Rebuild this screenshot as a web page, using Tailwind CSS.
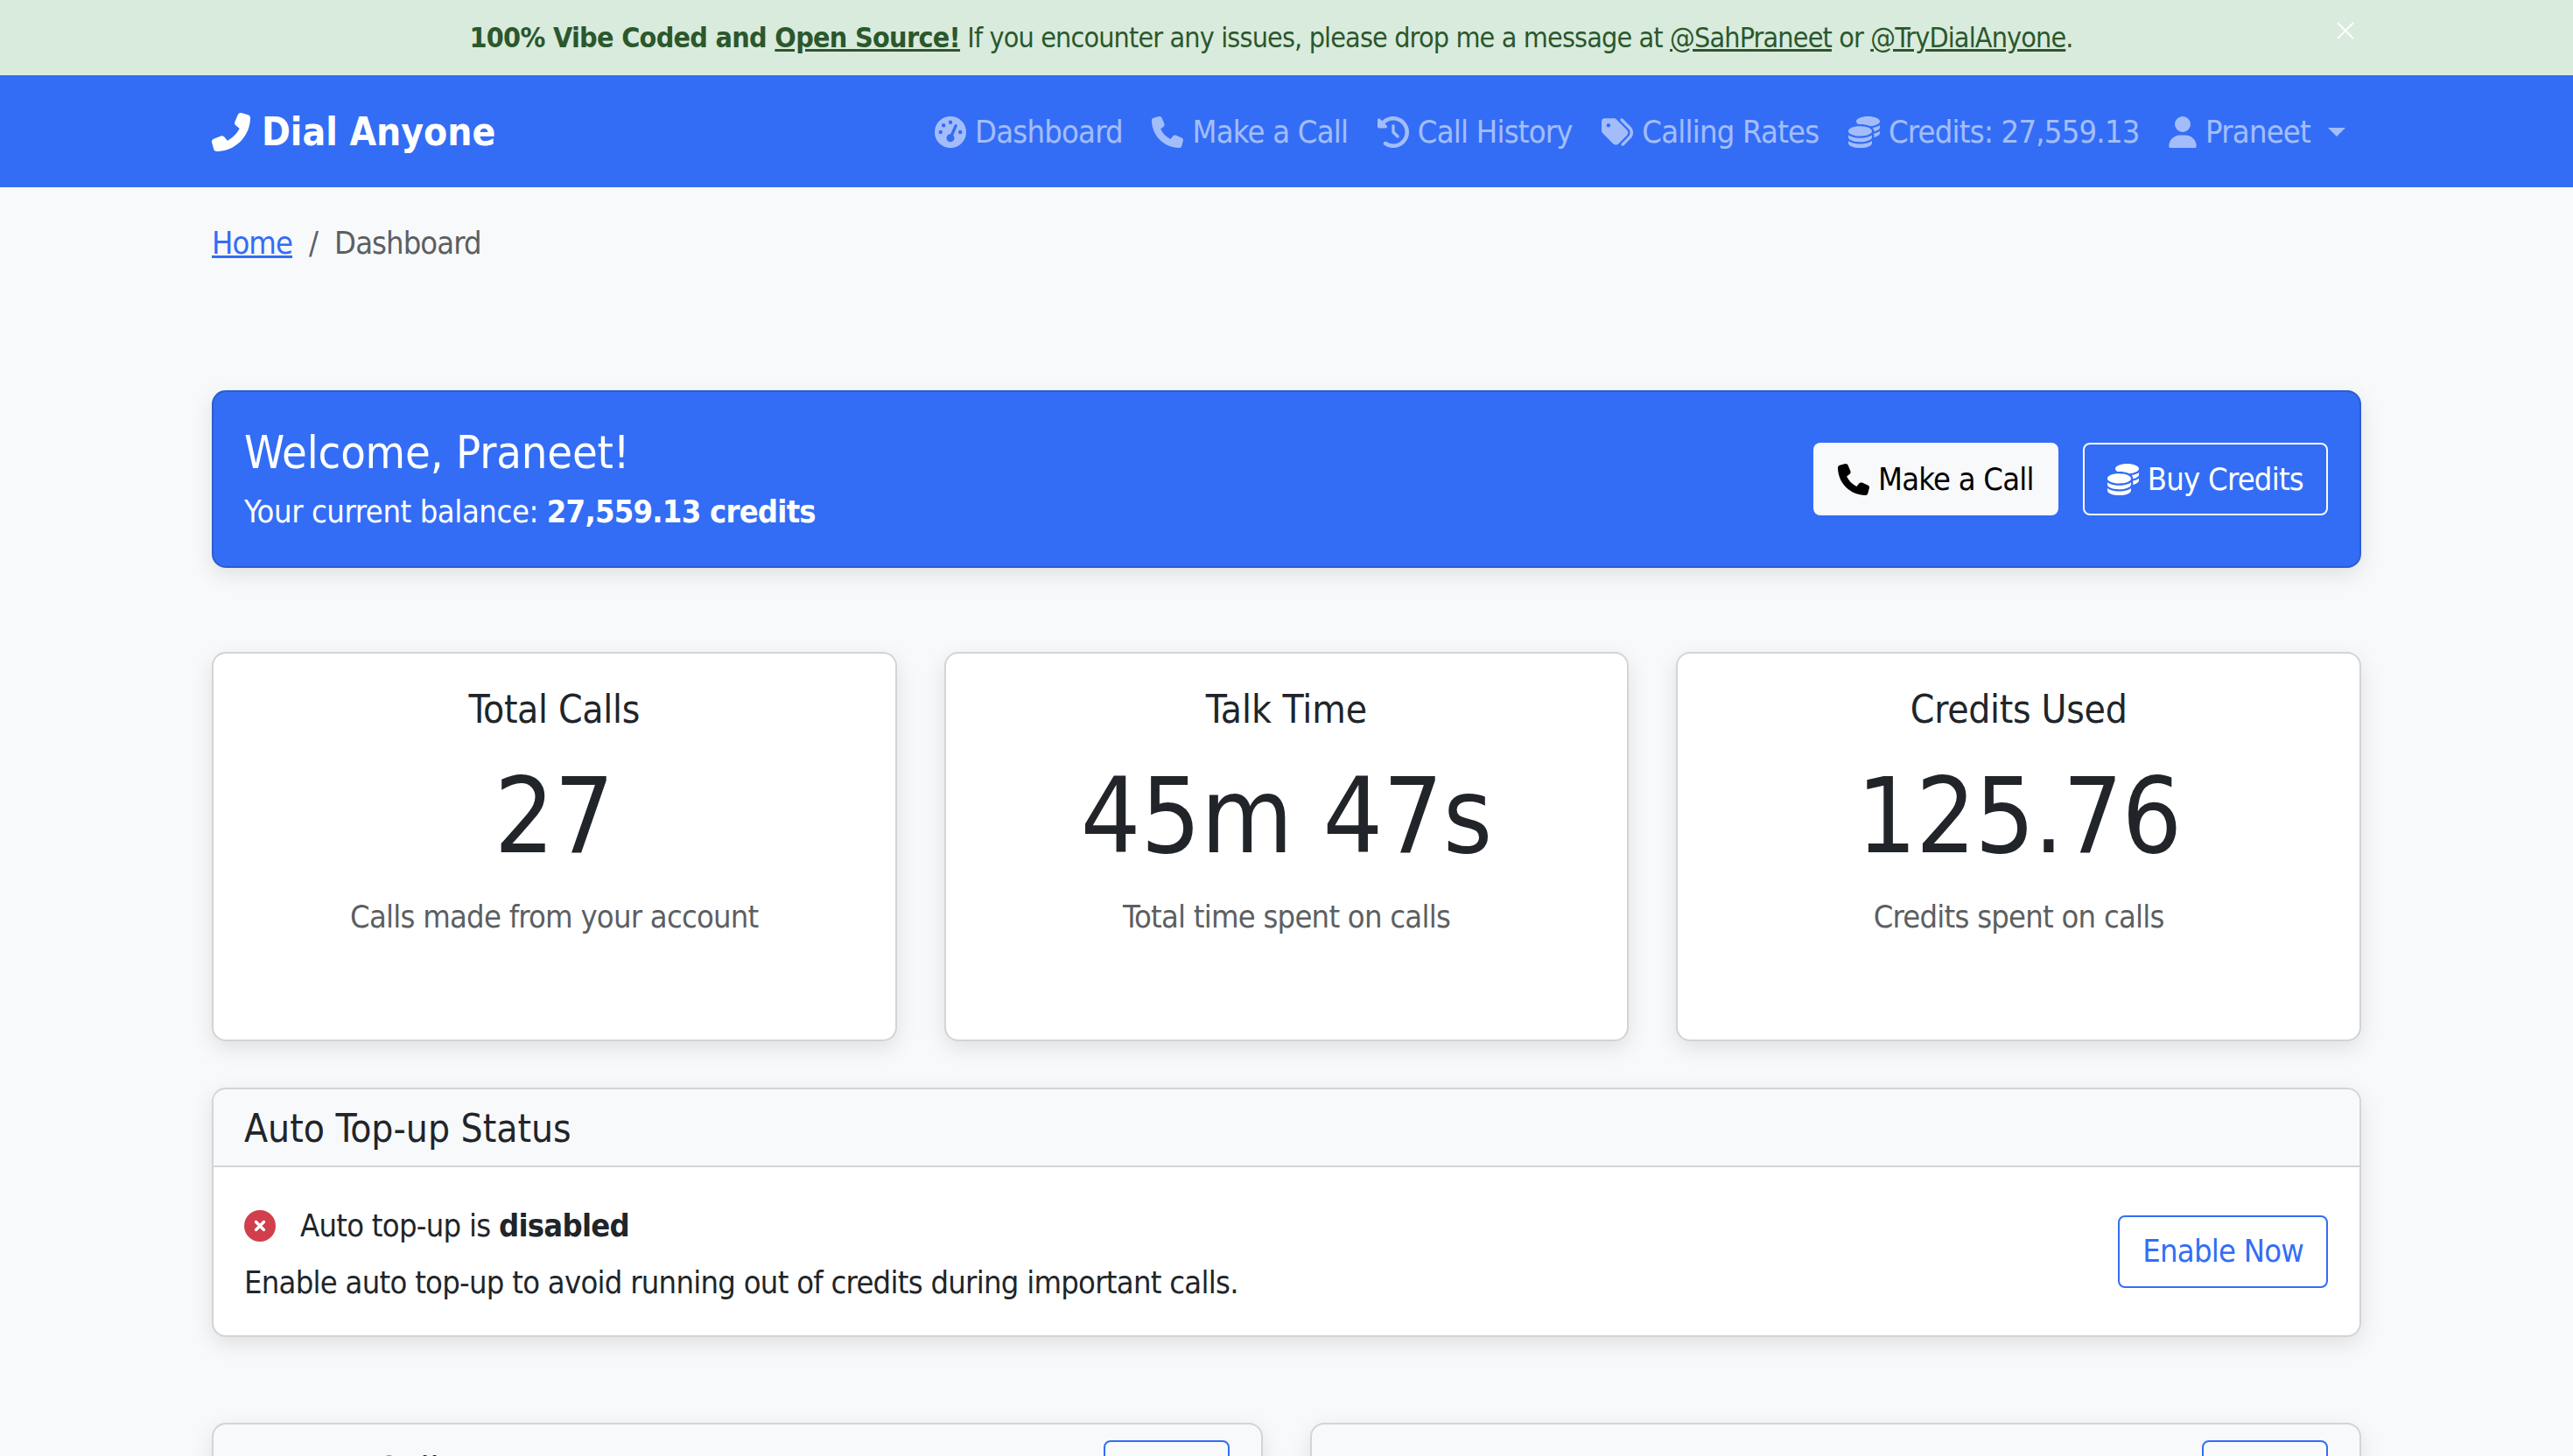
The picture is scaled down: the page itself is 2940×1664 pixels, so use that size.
<!DOCTYPE html>
<html lang="en">
  <head>
    <meta charset="UTF-8" />
    <title>Dial Anyone</title>
    <script src="https://cdn.jsdelivr.net/npm/@tailwindcss/browser@4"></script>
  </head>
  <body class="bg-[#f8f9fb] text-[#212529] font-['DejaVu_Sans_Condensed','DejaVu_Sans',sans-serif] font-stretch-condensed text-[36px] tracking-[-0.75px] h-[1664px] overflow-hidden">
    <div class="relative h-[86px] pr-[35px] bg-[#d9ebdc] text-[#2b572d] flex items-center justify-center text-[32px] tracking-[-0.85px]">
      <p><b class="tracking-[-0.7px]">100% Vibe Coded and <a href="#" class="underline">Open Source!</a></b> If you encounter any issues, please drop me a message at <a href="#" class="underline">@SahPraneet</a> or <a href="#" class="underline">@TryDialAnyone</a>.</p>
      <svg class="absolute left-[2668px] top-[23px] w-[24px] h-[24px]" viewBox="0 0 16 16" fill="none" stroke="#fff" stroke-width="1.2"><path d="M2 2l12 12M14 2L2 14" /></svg>
    </div>
    <header class="h-[128px] pt-[2px] bg-[#336df5] flex items-center justify-between pl-[242px] pr-[260px]">
      <a href="#" class="flex items-center gap-[13px] text-white font-bold text-[44px] tracking-normal">
        <svg class="w-[44px] h-[44px]" viewBox="0 0 512 512" fill="currentColor"><path d="M347.1 24.6c7.7-18.6 28-28.5 47.4-23.2l88 24C499.9 30.2 512 46 512 64c0 247.4-200.6 448-448 448c-18 0-33.8-12.1-38.6-29.5l-24-88c-5.3-19.4 4.6-39.7 23.2-47.4l96-40c16.3-6.8 35.2-2.1 46.3 11.6L207.3 368c70.4-33.3 127.4-90.3 160.7-160.7L318.7 167c-13.7-11.2-18.4-30-11.6-46.3l40-96z" /></svg>
        Dial Anyone
      </a>
      <nav class="flex items-center gap-[33.5px] text-white/55">
        <a href="#" class="flex items-center gap-[10px]"><svg class="w-[36px] h-[36px]" viewBox="0 0 512 512" fill="currentColor"><path d="M0 256a256 256 0 1 1 512 0A256 256 0 1 1 0 256zM288 96a32 32 0 1 0 -64 0 32 32 0 1 0 64 0zM256 416c35.3 0 64-28.7 64-64c0-17.4-6.9-33.1-18.1-44.6L366 161.7c5.3-12.1-.2-26.3-12.3-31.6s-26.3 .2-31.6 12.3L257.9 288c-.6 0-1.3 0-1.9 0c-35.3 0-64 28.7-64 64s28.7 64 64 64zM176 144a32 32 0 1 0 -64 0 32 32 0 1 0 64 0zM96 288a32 32 0 1 0 0-64 32 32 0 1 0 0 64zm352-32a32 32 0 1 0 -64 0 32 32 0 1 0 64 0z" /></svg>Dashboard</a>
        <a href="#" class="flex items-center gap-[10px]"><svg class="w-[36px] h-[36px]" viewBox="0 0 512 512" fill="currentColor"><path d="M164.9 24.6c-7.7-18.6-28-28.5-47.4-23.2l-88 24C12.1 30.2 0 46 0 64C0 311.4 200.6 512 448 512c18 0 33.8-12.1 38.6-29.5l24-88c5.3-19.4-4.6-39.7-23.2-47.4l-96-40c-16.3-6.8-35.2-2.1-46.3 11.6L304.7 368C234.3 334.7 177.3 277.7 144 207.3L193.3 167c13.7-11.2 18.4-30 11.6-46.3l-40-96z" /></svg>Make a Call</a>
        <a href="#" class="flex items-center gap-[10px]"><svg class="w-[36px] h-[36px]" viewBox="0 0 512 512" fill="currentColor"><path d="M75 75L41 41C25.9 25.9 0 36.6 0 57.9V168c0 13.3 10.7 24 24 24H134.1c21.4 0 32.1-25.9 17-41l-30.8-30.8C155 85.5 203 64 256 64c106 0 192 86 192 192s-86 192-192 192c-40.8 0-78.6-12.7-109.7-34.4c-14.5-10.1-34.4-6.6-44.6 7.9s-6.6 34.4 7.9 44.6C151.2 495 201.7 512 256 512c141.4 0 256-114.6 256-256S397.4 0 256 0C185.3 0 121.3 28.7 75 75zm181 53c-13.3 0-24 10.7-24 24V256c0 6.4 2.5 12.5 7 17l72 72c9.4 9.4 24.6 9.4 33.9 0s9.4-24.6 0-33.9l-65-65V152c0-13.3-10.7-24-24-24z" /></svg>Call History</a>
        <a href="#" class="flex items-center gap-[10px]"><svg class="w-[36px] h-[36px]" viewBox="0 0 512 512" fill="currentColor"><path d="M345 39.1L472.8 168.4c52.4 53 52.4 138.2 0 191.2L360.8 472.9c-9.3 9.4-24.5 9.5-33.9 .2s-9.5-24.5-.2-33.9L438.6 325.9c33.9-34.3 33.9-89.4 0-123.7L310.9 72.9c-9.3-9.4-9.2-24.6 .2-33.9s24.6-9.2 33.9 .2zM0 229.5V80C0 53.5 21.5 32 48 32H197.5c17 0 33.3 6.7 45.3 18.7l168 168c25 25 25 65.5 0 90.5L277.3 442.7c-25 25-65.5 25-90.5 0l-168-168C6.7 262.7 0 246.5 0 229.5zM144 144a32 32 0 1 0 -64 0 32 32 0 1 0 64 0z" /></svg>Calling Rates</a>
        <a href="#" class="flex items-center gap-[10px]"><svg class="w-[36px] h-[36px]" viewBox="0 0 512 512" fill="currentColor"><path d="M512 80c0 18-14.3 34.6-38.4 48c-29.1 16.1-72.5 27.5-122.3 30.9c-3.7-1.8-7.4-3.5-11.3-5C300.6 137.4 248.2 128 192 128c-8.3 0-16.4 .2-24.5 .6l-1.1-.6C142.3 114.6 128 98 128 80c0-44.2 86-80 192-80S512 35.8 512 80zM160.7 161.1c10.2-.7 20.7-1.1 31.3-1.1c62.2 0 117.4 12.3 152.5 31.4C369.3 204.9 384 221.7 384 240c0 4-.7 7.9-2.1 11.7c-4.6 13.2-17 25.3-35 35.5c0 0 0 0 0 0c-.1 .1-.3 .1-.4 .2l0 0 0 0c-.3 .2-.6 .3-.9 .5c-35 19.4-90.8 32-153.6 32c-59.6 0-112.9-11.3-148.2-29.1c-1.9-.9-3.7-1.9-5.5-2.9C14.3 274.6 0 258 0 240c0-34.8 53.4-64.5 128-75.4c10.5-1.5 21.4-2.7 32.7-3.5zM416 240c0-21.9-10.6-39.9-24.1-53.4c28.3-4.4 54.2-11.4 76.2-20.5c16.3-6.8 31.5-15.2 43.9-25.5V176c0 19.3-16.5 37.1-43.8 50.9c-14.6 7.4-32.4 13.7-52.4 18.5c.1-1.8 .2-3.5 .2-5.3zm-32 96c0 18-14.3 34.6-38.4 48c-1.8 1-3.6 1.9-5.5 2.9C304.9 404.7 251.6 416 192 416c-62.8 0-118.6-12.6-153.6-32C14.3 370.6 0 354 0 336V300.6c12.5 10.3 27.6 18.7 43.9 25.5C83.4 342.6 135.8 352 192 352s108.6-9.4 148.1-25.9c7.8-3.2 15.3-6.9 22.4-10.9c6.1-3.4 11.8-7.2 17.2-11.2c1.5-1.1 2.9-2.3 4.3-3.4V304v5.7V336zm32 0V304 278.1c19-4.2 36.5-9.5 52.1-16c16.3-6.8 31.5-15.2 43.9-25.5V272c0 10.5-5 21-14.9 30.9c-16.3 16.3-45 29.7-81.3 38.4c.1-1.7 .2-3.5 .2-5.3zM192 448c56.2 0 108.6-9.4 148.1-25.9c16.3-6.8 31.5-15.2 43.9-25.5V432c0 44.2-86 80-192 80S0 476.2 0 432V396.6c12.5 10.3 27.6 18.7 43.9 25.5C83.4 438.6 135.8 448 192 448z" /></svg>Credits: 27,559.13</a>
        <a href="#" class="flex items-center gap-[10px]"><svg class="w-[32px] h-[36px]" viewBox="0 0 448 512" fill="currentColor"><path d="M224 256A128 128 0 1 0 224 0a128 128 0 1 0 0 256zm-45.7 48C79.8 304 0 383.8 0 482.3C0 498.7 13.3 512 29.7 512H418.3c16.4 0 29.7-13.3 29.7-29.7C448 383.8 368.2 304 269.7 304H178.3z" /></svg>Praneet<span class="ml-[10px] w-0 h-0 border-x-[10px] border-x-transparent border-t-[10px] border-t-white/55"></span></a>
      </nav>
    </header>
    <main class="px-[242px]">
      <div class="pt-[37px] flex gap-[19px] text-[#5c5f62] tracking-[-0.9px]">
        <a href="#" class="underline text-[#336df5]">Home</a><span>/</span><span>Dashboard</span>
      </div>
      <section class="mt-[141px] h-[203px] rounded-[16px] bg-[#336df5] border-2 border-[#2a5dcf] shadow-[0_8px_24px_rgba(0,0,0,0.1)] flex items-center justify-between pl-[35px] pr-[36px] text-white">
        <div class="pb-[4px]">
          <h1 class="text-[52px] tracking-[-0.15px] mb-[2px] -mt-[2px]">Welcome, Praneet!</h1>
          <p class="tracking-[-0.4px]">Your current balance: <b class="tracking-[-0.75px]">27,559.13 credits</b></p>
        </div>
        <div class="flex gap-[28px]">
          <a href="#" class="h-[83px] px-[28px] rounded-[8px] bg-[#f8f9fb] text-black flex items-center gap-[10px]"><svg class="w-[36px] h-[36px]" viewBox="0 0 512 512" fill="currentColor"><path d="M164.9 24.6c-7.7-18.6-28-28.5-47.4-23.2l-88 24C12.1 30.2 0 46 0 64C0 311.4 200.6 512 448 512c18 0 33.8-12.1 38.6-29.5l24-88c5.3-19.4-4.6-39.7-23.2-47.4l-96-40c-16.3-6.8-35.2-2.1-46.3 11.6L304.7 368C234.3 334.7 177.3 277.7 144 207.3L193.3 167c13.7-11.2 18.4-30 11.6-46.3l-40-96z" /></svg>Make a Call</a>
          <a href="#" class="h-[83px] px-[26px] rounded-[8px] border-2 border-[#f8f9fb] flex items-center gap-[10px]"><svg class="w-[36px] h-[36px]" viewBox="0 0 512 512" fill="currentColor"><path d="M512 80c0 18-14.3 34.6-38.4 48c-29.1 16.1-72.5 27.5-122.3 30.9c-3.7-1.8-7.4-3.5-11.3-5C300.6 137.4 248.2 128 192 128c-8.3 0-16.4 .2-24.5 .6l-1.1-.6C142.3 114.6 128 98 128 80c0-44.2 86-80 192-80S512 35.8 512 80zM160.7 161.1c10.2-.7 20.7-1.1 31.3-1.1c62.2 0 117.4 12.3 152.5 31.4C369.3 204.9 384 221.7 384 240c0 4-.7 7.9-2.1 11.7c-4.6 13.2-17 25.3-35 35.5c0 0 0 0 0 0c-.1 .1-.3 .1-.4 .2l0 0 0 0c-.3 .2-.6 .3-.9 .5c-35 19.4-90.8 32-153.6 32c-59.6 0-112.9-11.3-148.2-29.1c-1.9-.9-3.7-1.9-5.5-2.9C14.3 274.6 0 258 0 240c0-34.8 53.4-64.5 128-75.4c10.5-1.5 21.4-2.7 32.7-3.5zM416 240c0-21.9-10.6-39.9-24.1-53.4c28.3-4.4 54.2-11.4 76.2-20.5c16.3-6.8 31.5-15.2 43.9-25.5V176c0 19.3-16.5 37.1-43.8 50.9c-14.6 7.4-32.4 13.7-52.4 18.5c.1-1.8 .2-3.5 .2-5.3zm-32 96c0 18-14.3 34.6-38.4 48c-1.8 1-3.6 1.9-5.5 2.9C304.9 404.7 251.6 416 192 416c-62.8 0-118.6-12.6-153.6-32C14.3 370.6 0 354 0 336V300.6c12.5 10.3 27.6 18.7 43.9 25.5C83.4 342.6 135.8 352 192 352s108.6-9.4 148.1-25.9c7.8-3.2 15.3-6.9 22.4-10.9c6.1-3.4 11.8-7.2 17.2-11.2c1.5-1.1 2.9-2.3 4.3-3.4V304v5.7V336zm32 0V304 278.1c19-4.2 36.5-9.5 52.1-16c16.3-6.8 31.5-15.2 43.9-25.5V272c0 10.5-5 21-14.9 30.9c-16.3 16.3-45 29.7-81.3 38.4c.1-1.7 .2-3.5 .2-5.3zM192 448c56.2 0 108.6-9.4 148.1-25.9c16.3-6.8 31.5-15.2 43.9-25.5V432c0 44.2-86 80-192 80S0 476.2 0 432V396.6c12.5 10.3 27.6 18.7 43.9 25.5C83.4 438.6 135.8 448 192 448z" /></svg>Buy Credits</a>
        </div>
      </section>
      <section class="mt-[96px] grid grid-cols-3 gap-[54px]">
        <div class="h-[445px] rounded-[16px] bg-white border-2 border-[#d3d4d6] shadow-[0_8px_24px_rgba(0,0,0,0.1)] text-center pt-[31px]">
          <h2 class="text-[44px] tracking-[-0.3px]">Total Calls</h2>
          <p class="text-[120px] tracking-normal leading-[1.2] mt-[17px]">27</p>
          <p class="text-[#5c5f62] mt-[16px]">Calls made from your account</p>
        </div>
        <div class="h-[445px] rounded-[16px] bg-white border-2 border-[#d3d4d6] shadow-[0_8px_24px_rgba(0,0,0,0.1)] text-center pt-[31px]">
          <h2 class="text-[44px] tracking-normal">Talk Time</h2>
          <p class="text-[120px] tracking-normal leading-[1.2] mt-[17px]">45m 47s</p>
          <p class="text-[#5c5f62] mt-[16px]">Total time spent on calls</p>
        </div>
        <div class="h-[445px] rounded-[16px] bg-white border-2 border-[#d3d4d6] shadow-[0_8px_24px_rgba(0,0,0,0.1)] text-center pt-[31px]">
          <h2 class="text-[44px] tracking-[-0.3px]">Credits Used</h2>
          <p class="text-[120px] tracking-[-1.2px] leading-[1.2] mt-[17px]">125.76</p>
          <p class="text-[#5c5f62] mt-[16px]">Credits spent on calls</p>
        </div>
      </section>
      <section class="mt-[53px] h-[285px] rounded-[16px] bg-white border-2 border-[#d3d4d6] shadow-[0_8px_24px_rgba(0,0,0,0.1)] overflow-hidden">
        <div class="h-[89px] pt-[2px] bg-[#f8f9fb] border-b-2 border-[#d3d4d6] flex items-center px-[35px] text-[44px] tracking-normal">Auto Top-up Status</div>
        <div class="flex items-center justify-between pl-[35px] pr-[36px] h-[192px]">
          <div class="pt-[7px] tracking-[-0.72px]">
            <p class="flex items-center gap-[28px]">
              <svg class="w-[36px] h-[36px] text-[#d03f4b]" viewBox="0 0 512 512" fill="currentColor"><path d="M256 512A256 256 0 1 0 256 0a256 256 0 1 0 0 512zM175 175c9.4-9.4 24.6-9.4 33.9 0l47 47 47-47c9.4-9.4 24.6-9.4 33.9 0s9.4 24.6 0 33.9l-47 47 47 47c9.4 9.4 9.4 24.6 0 33.9s-24.6 9.4-33.9 0l-47-47-47 47c-9.4 9.4-24.6 9.4-33.9 0s-9.4-24.6 0-33.9l47-47-47-47c-9.4-9.4-9.4-24.6 0-33.9z" /></svg>
              <span>Auto top-up is <b>disabled</b></span>
            </p>
            <p class="mt-[11px]">Enable auto top-up to avoid running out of credits during important calls.</p>
          </div>
          <a href="#" class="h-[83px] px-[26px] rounded-[8px] border-2 border-[#336df5] text-[#336df5] flex items-center">Enable Now</a>
        </div>
      </section>
      <section class="mt-[98px] grid grid-cols-2 gap-[54px]">
        <div class="h-[300px] rounded-[16px] bg-[#f8f9fb] border-2 border-[#d3d4d6] shadow-[0_8px_24px_rgba(0,0,0,0.1)] flex justify-between pl-[35px] pr-[36px] pt-[18px]">
          <h3 class="text-[44px] tracking-normal pt-[3px]">Recent Calls</h3>
          <a href="#" class="w-[144px] h-[83px] rounded-[8px] border-2 border-[#336df5]"></a>
        </div>
        <div class="h-[300px] rounded-[16px] bg-[#f8f9fb] border-2 border-[#d3d4d6] shadow-[0_8px_24px_rgba(0,0,0,0.1)] flex justify-end px-[36px] pt-[18px]">
          <a href="#" class="w-[144px] h-[83px] rounded-[8px] border-2 border-[#336df5]"></a>
        </div>
      </section>
    </main>
  </body>
</html>
